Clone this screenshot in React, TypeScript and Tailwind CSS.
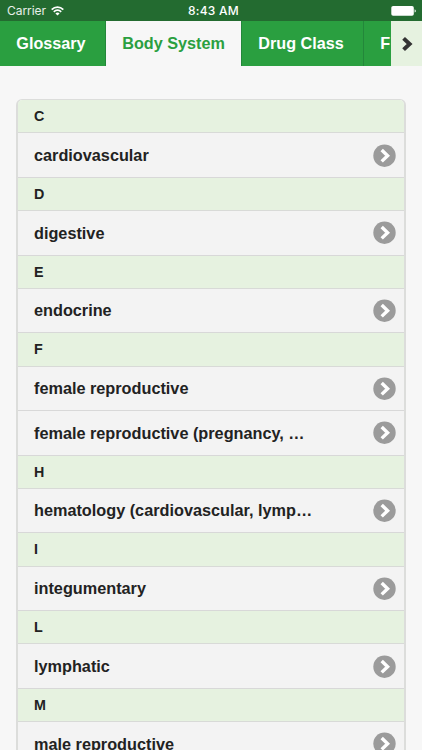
import { Fragment } from "react";

const tabs = [
  { label: "Glossary", width: "w-[106px]" },
  { label: "Body System", width: "w-[136px]", active: true },
  { label: "Drug Class", width: "w-[122px]" },
  { label: "F", width: "w-[110px]" },
];

const sections = [
  { letter: "C", items: ["cardiovascular"] },
  { letter: "D", items: ["digestive"] },
  { letter: "E", items: ["endocrine"] },
  { letter: "F", items: ["female reproductive", "female reproductive (pregnancy, …"] },
  { letter: "H", items: ["hematology (cardiovascular, lymp…"] },
  { letter: "I", items: ["integumentary"] },
  { letter: "L", items: ["lymphatic"] },
  { letter: "M", items: ["male reproductive"] },
];

function StatusBar() {
  return (
    <div className="relative flex h-[21px] items-center justify-between bg-[#236b30] pl-[7px] pr-[5px] font-['Inter','Roboto',sans-serif] text-white">
      <div className="flex items-center gap-[5px]">
        <span className="text-[12px] leading-[21px] tracking-[-0.05px] text-white/90">Carrier</span>
        <svg width="13" height="10" viewBox="0 0 13 10" fill="none" stroke="white" strokeWidth="1.7">
          <path d="M0.7 3.6C4 0.2 9 0.2 12.3 3.6" />
          <path d="M2.8 5.8C5 3.6 8 3.6 10.2 5.8" />
          <path d="M6.5 9.6 4.4 7.4C5.6 6.3 7.4 6.3 8.6 7.4Z" fill="white" stroke="none" />
        </svg>
      </div>
      <span className="absolute left-[188px] top-0 text-[12px] font-medium leading-[22px] tracking-[0.25px]">
        8:43 AM
      </span>
      <svg width="26" height="10" viewBox="0 0 26 10" fill="white">
        <rect x="0.3" y="0" width="22.5" height="9.8" rx="1.8" />
        <path d="M23.6 3.2C25.2 3.6 25.2 6.2 23.6 6.6Z" />
      </svg>
    </div>
  );
}

function TabBar() {
  return (
    <nav className="flex h-[45.4px] overflow-hidden">
      <div className="flex min-w-0 flex-1 overflow-hidden">
        {tabs.map((tab) => (
          <a
            key={tab.label}
            className={`shrink-0 whitespace-nowrap border-r border-[#23873a] pl-[16.3px] text-[16.2px] font-bold leading-[45px] ${tab.width} ${
              tab.active ? "bg-[#f7f7f7] text-[#2a9f40]" : "bg-[#2a9f40] text-white"
            }`}
          >
            {tab.label}
          </a>
        ))}
      </div>
      <button className="flex w-[31px] shrink-0 items-center justify-center bg-[#e6f2e0]">
        <svg width="12" height="16" viewBox="0 0 12 16" fill="none" stroke="#333" strokeWidth="4">
          <path d="M2.6 2.4 8.6 8 2.6 13.6" />
        </svg>
      </button>
    </nav>
  );
}

function ArrowIcon() {
  return (
    <svg width="23" height="23" viewBox="0 0 23 23" className="shrink-0">
      <circle cx="11.5" cy="11.7" r="11.2" fill="#9b9b9b" />
      <path d="M8.7 6 14.6 11.7 8.7 17.4" fill="none" stroke="white" strokeWidth="3.4" />
    </svg>
  );
}

export default function App() {
  return (
    <div className="h-[750px] w-[422px] overflow-hidden bg-[#f7f7f7] font-['Liberation_Sans',Arial,sans-serif] text-[#222]">
      <StatusBar />
      <TabBar />

      <div className="mx-4 mt-[32.6px] overflow-hidden rounded-t-[6px] border-x-2 border-t border-[#dcdddb]">
        {sections.map((section) => (
          <Fragment key={section.letter}>
            <div className="h-[33.4px] border-b border-[#d8dad7] bg-[#e6f2e0] pl-4 text-[14.3px] font-bold leading-[33px]">
              {section.letter}
            </div>
            {section.items.map((item) => (
              <div
                key={item}
                className="flex h-[44.4px] items-center justify-between border-b border-[#d8d8d8] bg-[#f3f3f3] pl-4 pr-[8.5px]"
              >
                <span className="whitespace-nowrap text-[16.25px] font-bold">{item}</span>
                <ArrowIcon />
              </div>
            ))}
          </Fragment>
        ))}
      </div>
    </div>
  );
}
